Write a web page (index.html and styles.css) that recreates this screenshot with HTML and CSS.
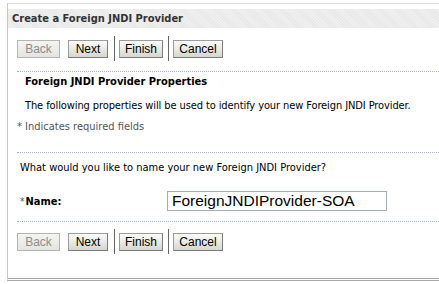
FILE: index.html
```html
<!DOCTYPE html>
<html>
<head>
<meta charset="utf-8">
<link rel="stylesheet" href="styles.css">
</head>
<body>
<div class="page">
  <div class="titlebar">Create a Foreign JNDI Provider</div>
  <div class="content">
    <div class="buttons">
      <button class="btn disabled">Back</button>
      <button class="btn w-next">Next</button>
      <span class="sep"></span>
      <button class="btn w-finish">Finish</button>
      <span class="sep"></span>
      <button class="btn w-cancel">Cancel</button>
    </div>
    <div class="rule"></div>
    <div class="section">
      <div class="heading">Foreign JNDI Provider Properties</div>
      <div class="desc">The following properties will be used to identify your new Foreign JNDI Provider.</div>
    </div>
    <div class="required">* Indicates required fields</div>
    <div class="rule rule2"></div>
    <div class="question">What would you like to name your new Foreign JNDI Provider?</div>
    <div class="field">
      <label class="label"><span class="star">*</span>Name:</label>
      <input class="input" type="text" value="ForeignJNDIProvider-SOA">
    </div>
    <div class="rule rule3"></div>
    <div class="buttons buttons2">
      <button class="btn disabled">Back</button>
      <button class="btn w-next">Next</button>
      <span class="sep"></span>
      <button class="btn w-finish">Finish</button>
      <span class="sep"></span>
      <button class="btn w-cancel">Cancel</button>
    </div>
  </div>
</div>
</body>
</html>
```
FILE: styles.css
```css
html, body {
  margin: 0;
  padding: 0;
  background: #ffffff;
}
body {
  font-family: "DejaVu Sans Condensed", "DejaVu Sans", sans-serif;
  font-size: 11px;
  color: #000;
  width: 439px;
  height: 284px;
  overflow: hidden;
  position: relative;
}
.page {
  position: relative;
  margin-left: 7px;
  margin-top: 3px;
  border-top: 1px solid #dedede;
  border-left: 1px solid #c8c8c8;
  height: 274px;
  border-bottom: 3px double #a8a8a8;
}
.titlebar {
  margin-top: 5px;
  height: 19px;
  line-height: 19px;
  padding-left: 4px;
  font-weight: bold;
  color: #333;
  background-color: #e8e8e8;
  background-image: repeating-linear-gradient(45deg, rgba(255,255,255,0.35) 0 1px, transparent 1px 2px);
}
.content {
  padding-left: 9px;
}
.buttons {
  display: flex;
  align-items: center;
  margin-top: 8px;
  height: 25px;
}
.btn {
  font-family: "Liberation Sans", Arial, sans-serif;
  font-size: 12px;
  height: 18px;
  padding: 0;
  margin: 0 8px 0 0;
  width: 43px;
  border: 1px solid #9c9c9c;
  border-right-color: #7c7c7c;
  border-bottom-color: #7c7c7c;
  background: linear-gradient(#fbfbf9, #e6e6e0 60%, #d6d6ce);
  color: #000;
  border-radius: 0;
}
.btn.disabled {
  color: #8c8c8c;
  border-color: #b4b4b4;
  background: linear-gradient(#f4f4f2, #e4e4e0);
}
.w-next { width: 40px; margin-right: 6px; }
.w-finish { width: 44px; margin-right: 5px; }
.w-cancel { width: 50px; }
.sep {
  width: 1px;
  height: 25px;
  background: #666;
  margin-right: 4px;
}
.rule {
  border-top: 1px dotted #a8b4c0;
  margin-top: 10px;
}
.section {
  padding-left: 8px;
}
.heading {
  font-weight: bold;
  margin-top: 3px;
  line-height: 13px;
}
.desc {
  margin-top: 11px;
  line-height: 13px;
  letter-spacing: -0.1px;
}
.required {
  margin-top: 8px;
  line-height: 13px;
  color: #555;
}
.rule2 { margin-top: 19px; }
.question {
  margin-top: 8px;
  padding-left: 3px;
  line-height: 13px;
}
.field {
  display: flex;
  align-items: center;
  margin-top: 17px;
  padding-left: 3px;
}
.label {
  font-weight: bold;
  width: 147px;
}
.star {
  font-weight: normal;
  color: #555;
  margin-right: 1px;
  font-size: 10px;
}
.input {
  width: 220px;
  height: 20px;
  box-sizing: border-box;
  border: 1px solid #a5acb2;
  padding: 0 0 0 4px;
  margin: 0;
  font-family: "Liberation Sans", Arial, sans-serif;
  font-size: 15.5px;
  color: #000;
}
.rule3 { margin-top: 10px; }
.buttons2 { margin-top: 7px; }
```
